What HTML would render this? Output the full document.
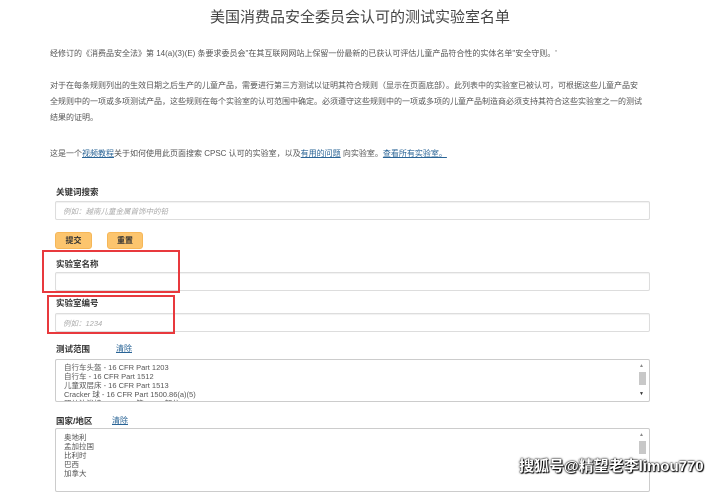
<!DOCTYPE html>
<html><head><meta charset="utf-8"><style>
*{margin:0;padding:0;box-sizing:border-box}
body{width:720px;height:481px;background:#fff;position:relative;overflow:hidden;font-family:"Liberation Sans","Noto Sans CJK SC",sans-serif;color:#555}
.a{position:absolute;white-space:nowrap}
.p{font-size:8px;color:#555}
.lab{font-size:8.5px;color:#333;font-weight:bold}
.inp{position:absolute;left:55px;width:595px;border:1px solid #ddd;border-radius:2px;background:#fff;box-shadow:inset 0 1px 1px rgba(0,0,0,.06)}
.ph{font-size:7.5px;color:#aaa;font-style:italic;position:absolute;left:7px;top:4px}
.btn{position:absolute;top:232px;height:17px;background:#fcc56e;border:1px solid #f6b758;border-radius:3px;font-size:8px;color:#333;font-weight:bold;text-align:center;line-height:15px}
.red{position:absolute;border:2px solid #e8393d}
a{color:#2a6496;text-decoration:underline}
.list{position:absolute;left:55px;width:595px;border:1px solid #ccc;border-radius:2px;overflow:hidden;font-size:7.5px;color:#555;padding:3px 8px;line-height:9px}
.sb{position:absolute;right:2px;top:2px;width:9px;bottom:2px}
.th{position:absolute;right:1px;width:7px;height:13px;background:#c8c8c8}
</style></head><body>
<div class="a" style="left:0;width:720px;text-align:center;top:6px;font-size:15px;color:#444">美国消费品安全委员会认可的测试实验室名单</div>
<div class="a p" style="left:50px;top:48px">经修订的《消费品安全法》第 14(a)(3)(E) 条要求委员会"在其互联网网站上保留一份最新的已获认可评估儿童产品符合性的实体名单"安全守则。'</div>
<div class="a p" style="left:50px;top:80px">对于在每条规则列出的生效日期之后生产的儿童产品，需要进行第三方测试以证明其符合规则（显示在页面底部）。此列表中的实验室已被认可，可根据这些儿童产品安</div>
<div class="a p" style="left:50px;top:96px">全规则中的一项或多项测试产品，这些规则在每个实验室的认可范围中确定。必须遵守这些规则中的一项或多项的儿童产品制造商必须支持其符合这些实验室之一的测试</div>
<div class="a p" style="left:50px;top:112px">结果的证明。</div>
<div class="a p" style="left:50px;top:148px">这是一个<a>视频教程</a>关于如何使用此页面搜索 CPSC 认可的实验室，以及<a>有用的问题</a> 向实验室。<a>查看所有实验室。</a></div>

<div class="a lab" style="left:56px;top:186px">关键词搜索</div>
<div class="inp" style="top:201px;height:19px"><span class="ph">例如：越南儿童金属首饰中的铅</span></div>
<div class="btn" style="left:55px;width:37px">提交</div>
<div class="btn" style="left:107px;width:36px">重置</div>

<div class="a lab" style="left:56px;top:258px">实验室名称</div>
<div class="inp" style="top:272px;height:19px"></div>
<div class="red" style="left:42px;top:250px;width:138px;height:43px"></div>

<div class="a lab" style="left:56px;top:297px">实验室编号</div>
<div class="inp" style="top:313px;height:19px"><span class="ph">例如：1234</span></div>
<div class="red" style="left:47px;top:295px;width:128px;height:39px"></div>

<div class="a lab" style="left:56px;top:343px">测试范围</div>
<div class="a" style="left:116px;top:343px;font-size:8px"><a>清除</a></div>
<div class="list" style="top:359px;height:43px">自行车头盔 - 16 CFR Part 1203<br>自行车 - 16 CFR Part 1512<br>儿童双层床 - 16 CFR Part 1513<br>Cracker 球 - 16 CFR Part 1500.86(a)(5)<br>婴儿沐浴椅 - 16 CFR 第 1215 部分 - ASTM F1967-19<div class="sb"><span style="position:absolute;top:0;left:1px;font-size:5px;color:#888">▲</span><div class="th" style="top:10px"></div><span style="position:absolute;bottom:0;left:1px;font-size:5px;color:#333">▼</span></div></div>

<div class="a lab" style="left:56px;top:415px">国家/地区</div>
<div class="a" style="left:112px;top:415px;font-size:8px"><a>清除</a></div>
<div class="list" style="top:428px;height:64px;padding-top:4px">奥地利<br>孟加拉国<br>比利时<br>巴西<br>加拿大<div class="sb"><span style="position:absolute;top:0;left:1px;font-size:5px;color:#888">▲</span><div class="th" style="top:10px"></div></div></div>

<div class="a" style="left:519px;top:455px;font-size:15px;color:#fff;font-weight:bold;text-shadow:0 0 2px #000,0 0 1px #000,1px 1px 1px #000">搜狐号@精望老李limou770</div>
</body></html>
